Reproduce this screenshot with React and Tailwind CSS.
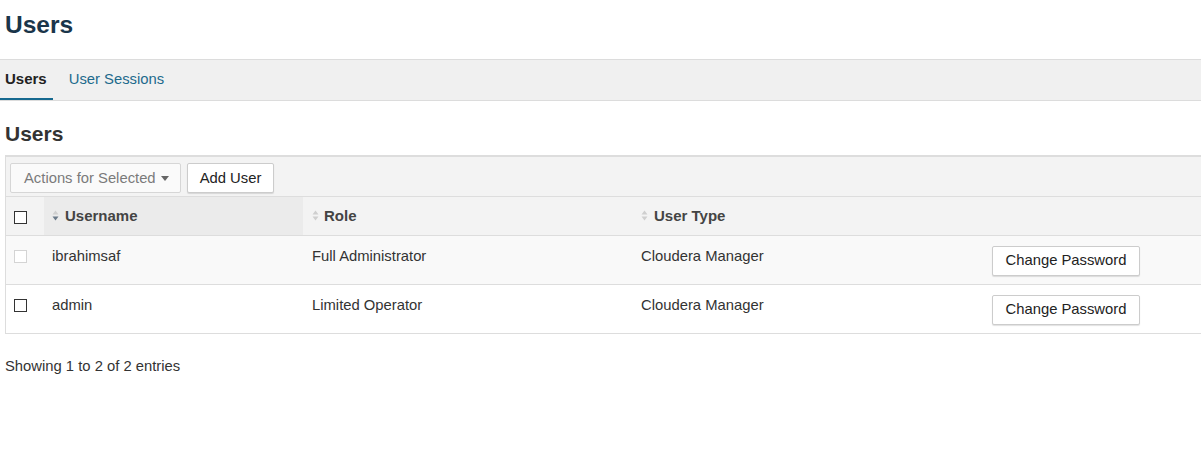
import React from "react";

function SortIcon({ active }) {
  return (
    <svg width="7" height="11" viewBox="0 0 7 11" className="inline-block shrink-0">
      <path d="M0.5 4.5 L3.5 0.5 L6.5 4.5 Z" fill="#cfcfcf" />
      <path d="M0.5 6.5 L3.5 10.5 L6.5 6.5 Z" fill={active ? "#6b7a8a" : "#cfcfcf"} />
    </svg>
  );
}

function Checkbox({ disabled }) {
  return (
    <span
      className={
        "block w-[13px] h-[13px] border bg-white " +
        (disabled ? "border-[#d4d4d4]" : "border-[#333]")
      }
    />
  );
}

const rows = [
  { user: "ibrahimsaf", role: "Full Administrator", type: "Cloudera Manager", disabled: true, bg: "bg-[#f9f9f9]" },
  { user: "admin", role: "Limited Operator", type: "Cloudera Manager", disabled: false, bg: "bg-white" },
];

export default function App() {
  return (
    <div
      className="w-[1201px] min-h-[472px] bg-white overflow-hidden text-[#333]"
      style={{ fontFamily: '"Liberation Sans", Arial, sans-serif' }}
    >
      <div className="h-[59px] pt-[10px] pl-[5px]">
        <h1 className="text-[24.5px] leading-[30px] font-bold text-[#1a354a]">Users</h1>
      </div>

      <div className="flex h-[42px] bg-[#f0f0f0] border-t border-b border-[#dcdcdc]">
        <div className="pl-[5px] pr-[6px] flex items-center border-b-2 border-[#16698f] text-[15px] font-bold text-[#222]">
          Users
        </div>
        <div className="pl-[16px] flex items-center text-[14.8px] text-[#1d6a8c] pb-[2px]">
          User Sessions
        </div>
      </div>

      <h2 className="pl-[5px] pt-[20px] text-[21px] leading-[26px] font-bold text-[#333]">Users</h2>

      <div className="mt-[8px] ml-[5px] border-l border-t-2 border-b border-[#dddddd]">
        <div className="h-[40px] bg-[#f3f3f3] border-b border-[#dddddd] flex items-start pt-[6px] pl-[4px] gap-[6px]">
          <button className="h-[30px] w-[171px] flex items-center pl-[13px] bg-[#fafafa] border border-[#d6d6d6] rounded-[2px] text-[14.8px] text-[#7a7a7a]">
            Actions for Selected
            <svg width="8" height="5" viewBox="0 0 8 5" className="ml-[5px]">
              <path d="M0 0 L8 0 L4 5 Z" fill="#666" />
            </svg>
          </button>
          <button className="h-[30px] w-[87px] flex items-center justify-center bg-white border border-[#ccc] rounded-[2px] shadow-[0_1px_1px_rgba(0,0,0,0.12)] text-[14.8px] text-[#222]">
            Add User
          </button>
        </div>

        <table className="w-full table-fixed border-collapse">
          <colgroup>
            <col className="w-[38px]" />
            <col className="w-[259px]" />
            <col className="w-[329px]" />
            <col className="w-[352px]" />
            <col />
          </colgroup>
          <thead>
            <tr className="h-[38px] bg-[#f3f3f3] border-b border-[#dddddd]">
              <th className="pl-[8px] align-middle">
                <div className="pt-[3px]"><Checkbox /></div>
              </th>
              <th className="bg-[#ebebeb] pl-[8px] text-left align-middle">
                <div className="flex items-center gap-[6px] text-[15px] font-bold text-[#444]">
                  <SortIcon active /> Username
                </div>
              </th>
              <th className="pl-[9px] text-left align-middle">
                <div className="flex items-center gap-[5px] text-[15px] font-bold text-[#444]">
                  <SortIcon /> Role
                </div>
              </th>
              <th className="pl-[9px] text-left align-middle">
                <div className="flex items-center gap-[6px] text-[15px] font-bold text-[#444]">
                  <SortIcon /> User Type
                </div>
              </th>
              <th />
            </tr>
          </thead>
          <tbody>
            {rows.map((r, i) => (
              <tr key={r.user} className={"h-[49px] " + r.bg + (i === 0 ? " border-b border-[#dddddd]" : "")}>
                <td className="pl-[8px] align-top pt-[14px]">
                  <Checkbox disabled={r.disabled} />
                </td>
                <td className="pl-[8px] pt-[10px] align-top text-[14.8px] leading-[20px] text-[#333]">{r.user}</td>
                <td className="pl-[9px] pt-[10px] align-top text-[14.8px] leading-[20px] text-[#333]">{r.role}</td>
                <td className="pl-[9px] pt-[10px] align-top text-[14.8px] leading-[20px] text-[#333]">{r.type}</td>
                <td className="pl-[8px] pt-[10px] align-top">
                  <button className="h-[30px] w-[148px] flex items-center justify-center bg-white border border-[#ccc] rounded-[2px] shadow-[0_1px_1px_rgba(0,0,0,0.12)] text-[14.8px] text-[#222]">
                    Change Password
                  </button>
                </td>
              </tr>
            ))}
          </tbody>
        </table>
      </div>

      <p className="pl-[5px] pt-[22px] text-[14.8px] leading-[20px] text-[#333]">Showing 1 to 2 of 2 entries</p>
    </div>
  );
}
